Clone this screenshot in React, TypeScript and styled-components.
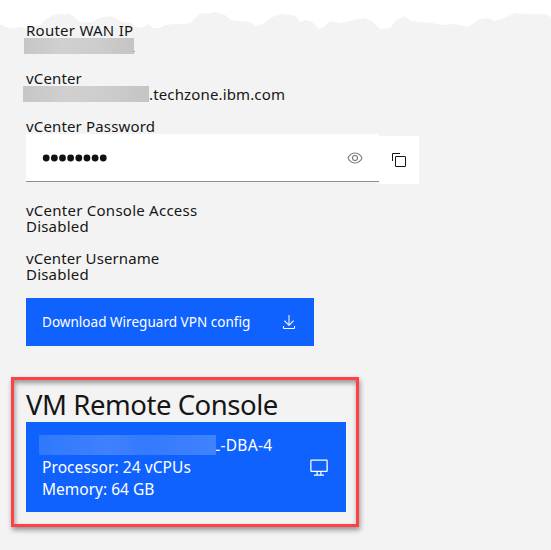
import React from "react";
import styled, { createGlobalStyle } from "styled-components";

const GlobalStyle = createGlobalStyle`
  * { box-sizing: border-box; }
  body { margin: 0; background: #f3f3f3; }
`;

const Page = styled.main`
  position: relative;
  width: 551px;
  height: 550px;
  overflow: hidden;
  padding: 22px 0 0 11px;
  background: #f3f3f3;
  color: #161616;
  font-family: "Noto Sans", sans-serif;
  font-size: 15px;
  line-height: 16px;
`;

const TornEdge = styled.svg`
  position: absolute;
  top: 0;
  left: 0;
`;

const Details = styled.section`
  position: relative;
  display: flex;
  flex-direction: column;
  align-items: flex-start;
  gap: 16px;
  padding-left: 15px;
`;

const Field = styled.div`
  display: flex;
  flex-direction: column;
  align-items: flex-start;
`;

const Text = styled.div<{ $track?: number }>`
  height: 16px;
  line-height: 16px;
  white-space: nowrap;
  letter-spacing: ${(p) => p.$track ?? 0}px;
`;

const MaskedValue = styled.div`
  display: flex;
  align-items: center;
  height: 16px;
`;

const Mask = styled.span<{ $width: number; $shift: number }>`
  flex: none;
  width: ${(p) => p.$width}px;
  height: 16px;
  margin-left: ${(p) => p.$shift}px;
  background: linear-gradient(100deg, #c6c6c6, #d0d0d0 35%, #cdcdcd 65%, #c4c4c4);
`;

const LinkTrace = styled.span`
  align-self: flex-end;
  width: 1px;
  height: 1px;
  margin-bottom: 2px;
  background: #5b9bd5;
`;

const PasswordRow = styled.div`
  display: flex;
  height: 52px;
`;

const PasswordBox = styled.div`
  display: flex;
  align-items: center;
  justify-content: space-between;
  width: 353px;
  height: 48px;
  padding: 0 16px;
  background: #fff;
  border-bottom: 1px solid #8d8d8d;
`;

const Dots = styled.svg`
  display: block;
  margin-top: 1px;
`;

const CopyButton = styled.button`
  display: flex;
  align-items: center;
  justify-content: center;
  width: 40px;
  height: 48px;
  margin-top: 2px;
  padding: 0;
  border: 0;
  background: #fff;
  color: #161616;
`;

const DownloadButton = styled.button`
  display: flex;
  align-items: center;
  justify-content: space-between;
  width: 288px;
  height: 48px;
  padding: 0 17px 0 16px;
  border: 0;
  background: #0f62fe;
  color: #fff;
  font: 13.5px/18px "Noto Sans", sans-serif;
`;

const ConsolePanel = styled.section`
  width: 348px;
  height: 150px;
  margin-top: 31px;
  padding: 8px 12px;
  border: 3px solid #fd4145;
  box-shadow: 1px 3px 5px rgba(0, 0, 0, 0.4), inset 1px 3px 5px rgba(0, 0, 0, 0.38);
`;

const Heading = styled.h2`
  height: 34px;
  margin: 0;
  font-size: 27.5px;
  font-weight: 400;
  line-height: 33px;
  letter-spacing: -0.45px;
  white-space: nowrap;
`;

const ConsoleTile = styled.div`
  display: flex;
  align-items: center;
  justify-content: space-between;
  width: 320px;
  height: 90px;
  padding: 0 17px 0 16px;
  background: #0f62fe;
  color: #fff;
  font-size: 15.5px;
`;

const Specs = styled.div`
  display: flex;
  flex-direction: column;
  gap: 6px;
`;

const MachineName = styled.div`
  display: flex;
  align-items: center;
  height: 16px;
`;

const NameMask = styled.span`
  position: relative;
  z-index: 1;
  flex: none;
  width: 177px;
  height: 20px;
  margin: 0 -4px 0 -3px;
  background: linear-gradient(90deg, #3079fd, #4080fd 40%, #347afd 60%, #4182fd);
`;

const EDGE =
  "M0 0V24L6 27L12 28L20 27L27 29L35 26L40 25L45 20L52 16L57 14L62 14L66 15L68 13L72 15L76 19L80 22L93 22L97 19L104 17L110 16L116 18L122 22L130 23L137 27L142 28L148 24L154 28L160 28L165 25L175 24L184 24L190 23L195 18L201 13L207 14L215 12L225 15L231 20L240 21L250 22L256 26L263 24L270 18L280 14L290 15L296 16L300 22L306 20L312 22L319 29L324 27L330 21L340 23L350 21L358 19L364 18L372 21L380 29L390 28L396 20L404 16L411 21L420 22L432 23L442 25L455 24L468 27L475 22L480 19L488 18L495 21L504 18L515 13L525 14L545 14L551 17V0Z";

const PasswordDots = () => (
  <Dots width="66" height="8" viewBox="0 0 66 8" fill="#111">
    {Array.from({ length: 8 }, (_, i) => (
      <circle key={i} cx={4.2 + i * 8.15} cy="4" r="3.4" />
    ))}
  </Dots>
);

const EyeIcon = () => (
  <svg width="16" height="16" viewBox="0 0 16 16" fill="#6f6f6f">
    <path d="M15.5 7.8C14.3 4.7 11.3 2.6 8 2.5 4.7 2.6 1.7 4.7.5 7.8v.4C1.7 11.3 4.7 13.4 8 13.5c3.3-.1 6.3-2.2 7.5-5.3v-.4ZM8 12.5c-2.7 0-5.4-2-6.5-4.5C2.6 5.5 5.3 3.5 8 3.5s5.4 2 6.5 4.5c-1.1 2.5-3.8 4.5-6.5 4.5Z" />
    <path d="M8 5a3 3 0 1 0 0 6 3 3 0 0 0 0-6Zm0 5a2 2 0 1 1 0-4 2 2 0 0 1 0 4Z" />
  </svg>
);

const CopyIcon = () => (
  <svg width="16" height="16" viewBox="0 0 16 16" fill="none" stroke="currentColor">
    <rect x="4.5" y="4.5" width="10" height="10" rx="0.3" />
    <path d="M1.5 9V1.5H9" />
  </svg>
);

const DownloadIcon = () => (
  <svg width="16" height="16" viewBox="0 0 32 32" fill="currentColor">
    <path d="M26 24v4H6v-4H4v4a2 2 0 0 0 2 2h20a2 2 0 0 0 2-2v-4Z" />
    <path d="m26 14-1.41-1.41L17 20.17V2h-2v18.17l-7.59-7.58L6 14l10 10 10-10Z" />
  </svg>
);

const ScreenIcon = () => (
  <svg width="20" height="20" viewBox="0 0 32 32" fill="currentColor">
    <path d="M28 4H4a2 2 0 0 0-2 2v16a2 2 0 0 0 2 2h8v4H8v2h16v-2h-4v-4h8a2 2 0 0 0 2-2V6a2 2 0 0 0-2-2ZM18 28h-4v-4h4Zm10-6H4V6h24Z" />
  </svg>
);

export default function App() {
  return (
    <>
      <GlobalStyle />
      <Page>
        <TornEdge width="551" height="32" viewBox="0 0 551 32">
          <path d={EDGE} fill="#fff" />
        </TornEdge>
        <Details>
          <Field>
            <Text $track={0.25}>Router WAN IP</Text>
            <MaskedValue>
              <Mask $width={110} $shift={-2} />
              <LinkTrace />
            </MaskedValue>
          </Field>
          <Field>
            <Text $track={0.15}>vCenter</Text>
            <MaskedValue>
              <Mask $width={126} $shift={-3} />
              <Text $track={0.14}>.techzone.ibm.com</Text>
            </MaskedValue>
          </Field>
          <Field>
            <Text $track={0.15}>vCenter Password</Text>
            <PasswordRow>
              <PasswordBox>
                <PasswordDots />
                <EyeIcon />
              </PasswordBox>
              <CopyButton aria-label="Copy password"><CopyIcon /></CopyButton>
            </PasswordRow>
          </Field>
          <Field>
            <Text $track={0.25}>vCenter Console Access</Text>
            <Text $track={0.2}>Disabled</Text>
          </Field>
          <Field>
            <Text $track={0.1}>vCenter Username</Text>
            <Text $track={0.2}>Disabled</Text>
          </Field>
          <DownloadButton>
            <Text $track={0.03}>Download Wireguard VPN config</Text>
            <DownloadIcon />
          </DownloadButton>
        </Details>
        <ConsolePanel>
          <Heading>VM Remote Console</Heading>
          <ConsoleTile>
            <Specs>
              <MachineName>
                <NameMask />
                <Text $track={0.3}>L-DBA-4</Text>
              </MachineName>
              <Text $track={0.08}>Processor: 24 vCPUs</Text>
              <Text>Memory: 64 GB</Text>
            </Specs>
            <ScreenIcon />
          </ConsoleTile>
        </ConsolePanel>
      </Page>
    </>
  );
}
